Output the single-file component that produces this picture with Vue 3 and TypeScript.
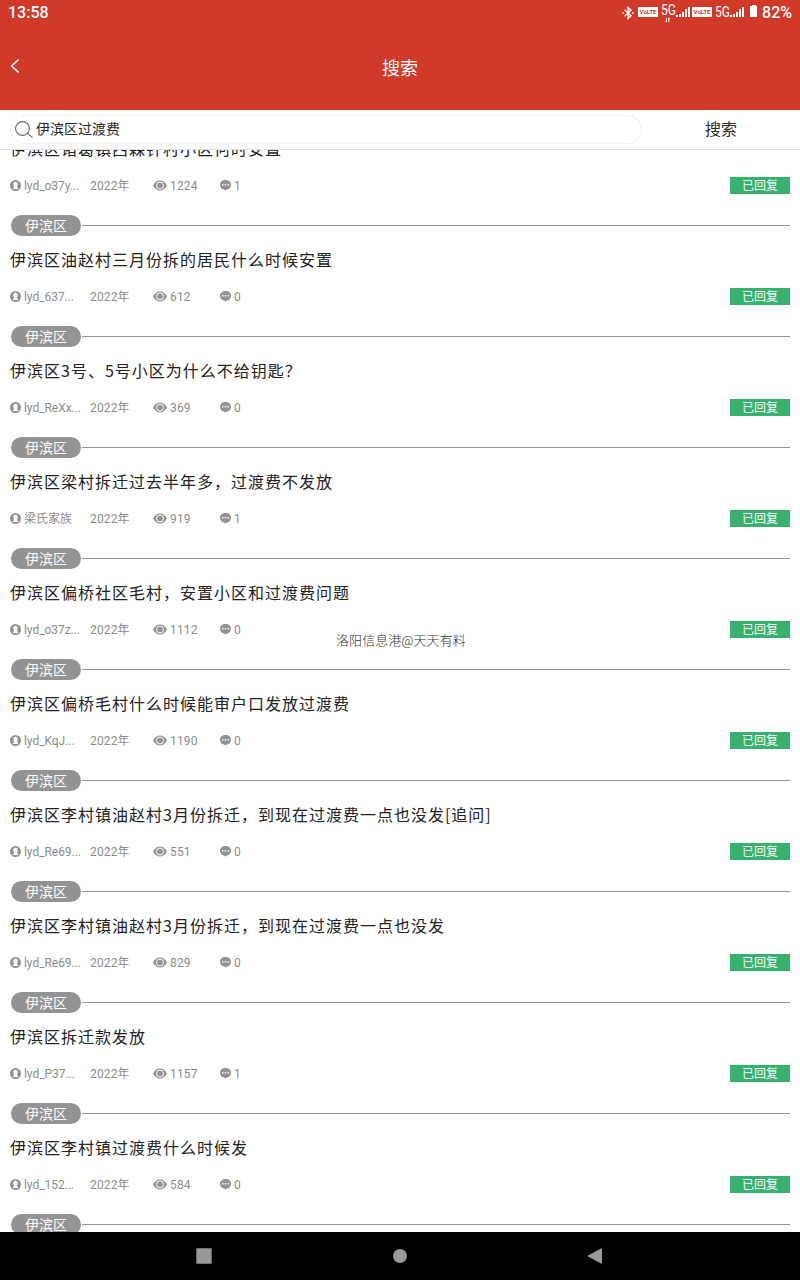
<script setup lang="ts">
interface Post {
  title: string
  user: string
  views: number
  replies: number
}

const year = '2022年'
const area = '伊滨区'
const keyword = '伊滨区过渡费'

const posts: Post[] = [
  { title: '伊滨区诸葛镇西森针村小区何时安置', user: 'lyd_o37y...', views: 1224, replies: 1 },
  { title: '伊滨区油赵村三月份拆的居民什么时候安置', user: 'lyd_637...', views: 612, replies: 0 },
  { title: '伊滨区3号、5号小区为什么不给钥匙？', user: 'lyd_ReXx...', views: 369, replies: 0 },
  { title: '伊滨区梁村拆迁过去半年多，过渡费不发放', user: '梁氏家族', views: 919, replies: 1 },
  { title: '伊滨区偏桥社区毛村，安置小区和过渡费问题', user: 'lyd_o37z...', views: 1112, replies: 0 },
  { title: '伊滨区偏桥毛村什么时候能审户口发放过渡费', user: 'lyd_KqJ...', views: 1190, replies: 0 },
  { title: '伊滨区李村镇油赵村3月份拆迁，到现在过渡费一点也没发[追问]', user: 'lyd_Re69...', views: 551, replies: 0 },
  { title: '伊滨区李村镇油赵村3月份拆迁，到现在过渡费一点也没发', user: 'lyd_Re69...', views: 829, replies: 0 },
  { title: '伊滨区拆迁款发放', user: 'lyd_P37...', views: 1157, replies: 1 },
  { title: '伊滨区李村镇过渡费什么时候发', user: 'lyd_152...', views: 584, replies: 0 },
]
</script>

<template>
  <div class="screen">
    <header class="header">
      <div class="status">
        <span class="clock">13:58</span>
        <div class="indicators">
          <svg class="bt" width="12" height="14" viewBox="0 0 12 14" fill="none" stroke="#fff" stroke-width="1.3">
            <path d="M2.500 3.800 9 9.800 6 12.600V1.400L9 4.200 2.500 10.200" />
            <path d="M.3 7h1.600M10 7h1.600" stroke-width="1.500" />
          </svg>
          <span class="volte">VoLTE</span>
          <span class="net"><span class="gen">5G</span>
            <svg class="arrows" width="6" height="6" viewBox="0 0 6 6" fill="none" stroke="#fff" stroke-width="1">
              <path d="M1.500 1v4M.3 3.800 1.500 5M3.800 5V1L5 2.200" />
            </svg>
          </span>
          <svg class="bars b1" width="14" height="11" viewBox="0 0 14 11" fill="#fff" shape-rendering="crispEdges">
            <path d="M0 9h2v2H0zM3 8h2v3H3zM6 6h2v5H6zM9 3h2v8H9zM12 1h2v10h-2z" />
          </svg>
          <span class="volte">VoLTE</span>
          <span class="net second"><span class="gen">5G</span></span>
          <svg class="bars b2" width="14" height="11" viewBox="0 0 14 11" fill="#fff" shape-rendering="crispEdges">
            <path d="M0 9h2v2H0zM3 8h2v3H3zM6 6h2v5H6zM9 3h2v8H9zM12 1h2v10h-2z" />
          </svg>
          <svg class="battery" width="8" height="12" viewBox="0 0 8 12" shape-rendering="crispEdges">
            <path d="M2 0h4v1h1v11H0V1h2z" fill="#fff" />
          </svg>
          <span class="percent">82%</span>
        </div>
      </div>
      <div class="nav">
        <svg class="back" width="10" height="14" viewBox="0 0 10 14" fill="none" stroke="#fff" stroke-width="1.500">
          <path d="M8.600.6 1.600 7l7 6.400" />
        </svg>
        <h1>搜索</h1>
      </div>
    </header>

    <div class="search">
      <div class="field">
        <svg width="18" height="18" viewBox="0 0 18 18" fill="none" stroke="#666" stroke-width="1.100">
          <circle cx="7.500" cy="7.500" r="6.900" />
          <path d="m12.500 12.200 5 4.400" />
        </svg>
        <span>{{ keyword }}</span>
      </div>
      <button class="go" type="button">搜索</button>
    </div>

    <main class="list">
      <article v-for="(p, i) in posts" :key="i" class="post">
        <div class="area"><span class="tag">{{ area }}</span><i class="rule"></i></div>
        <h2>{{ p.title }}</h2>
        <div class="meta">
          <span class="user">
            <svg width="11" height="11" viewBox="0 0 11 11">
              <circle cx="5.500" cy="5.500" r="5.500" fill="#939393" />
              <path d="M5.500 1.800c1.600 0 2.200 1 2.200 2.300 0 1-.2 1.600-.6 2.100v1.300l1 .6v1H2.900v-1l1-.6V6.200c-.4-.5-.6-1.100-.6-2.100 0-1.300.6-2.300 2.200-2.300z" fill="#fff" />
            </svg><span>{{ p.user }}</span>
          </span>
          <span class="year">{{ year }}</span>
          <span class="views">
            <svg width="14" height="11" viewBox="0 0 14 11">
              <path d="M0 5.500C3.500-1.300 10.500-1.300 14 5.500 10.500 12.300 3.500 12.300 0 5.500z" fill="#939393" />
              <circle cx="7" cy="5.500" r="3.500" fill="none" stroke="#fff" stroke-width="1" />
            </svg><span>{{ p.views }}</span>
          </span>
          <span class="replies">
            <svg width="11" height="11" viewBox="0 0 11 11">
              <path d="M5.500 0C8.800 0 11 2 11 4.800S9 9.400 7 9.600L5.500 10.400 4 9.600C2 9.400 0 7.600 0 4.800S2.200 0 5.500 0z" fill="#939393" />
              <path d="M2 4h1.400v1.400H2zM4.800 4h1.400v1.400H4.800zM7.600 4H9v1.400H7.600z" fill="#fff" />
            </svg><span>{{ p.replies }}</span>
          </span>
          <span class="badge">已回复</span>
        </div>
      </article>
      <div class="area"><span class="tag">{{ area }}</span><i class="rule"></i></div>
    </main>

    <footer class="sysnav">
      <svg width="16" height="16" viewBox="0 0 16 16"><rect x=".3" y=".3" width="15.400" height="15.400" rx="1" fill="#999" /></svg>
      <svg width="16" height="16" viewBox="0 0 16 16"><circle cx="8" cy="8" r="7" fill="#999" /></svg>
      <svg width="16" height="16" viewBox="0 0 16 16"><path d="M14 0v16L0 8.500v-1z" fill="#999" /></svg>
    </footer>

    <div class="watermark">洛阳信息港@天天有料</div>
  </div>
</template>

<style>
body {
  margin: 0;
  background: #fff;
}
</style>

<style scoped>
.screen {
  position: relative;
  width: 800px;
  height: 1280px;
  display: flex;
  flex-direction: column;
  overflow: hidden;
  background: #fff;
  font-family: Roboto, "Noto Sans CJK SC", sans-serif;
}
svg {
  display: block;
  flex: none;
}
.header {
  height: 110px;
  flex: none;
  background: #d13a29;
  color: #fff;
}
.status {
  height: 25px;
  display: flex;
  justify-content: space-between;
  padding: 0 8px;
  font-size: 16px;
  font-weight: 500;
  line-height: 25px;
}
.indicators {
  display: flex;
  align-items: flex-start;
}
.bt {
  margin: 6px 4px 0 0;
}
.volte {
  width: 20px;
  height: 10px;
  margin-top: 7px;
  background: #fff;
  color: #d13a29;
  font-size: 6px;
  font-weight: 700;
  line-height: 10px;
  text-align: center;
}
.net {
  position: relative;
  width: 15px;
  margin: 2px 0 0 3px;
  font-size: 12px;
  font-weight: 400;
  line-height: 16px;
}
.gen {
  display: block;
  transform: scaleY(1.2);
}
.net.second {
  margin-top: 4px;
}
.arrows {
  position: absolute;
  left: 4px;
  top: 15px;
}
.bars {
  margin-top: 6px;
}
.b1 {
  margin-right: 2px;
}
.battery {
  margin: 5px 4px 0 6px;
}
.nav {
  height: 85px;
  display: flex;
  align-items: center;
  box-sizing: border-box;
  padding: 0 10px;
}
.back {
  margin-right: -10px;
  margin-top: -3px;
}
h1 {
  flex: 1;
  margin: 2px 0 0;
  text-align: center;
  font-size: 18px;
  font-weight: 400;
  line-height: 26px;
}
.search {
  height: 40px;
  flex: none;
  box-sizing: border-box;
  border-bottom: 1px solid #e0e0e0;
  display: flex;
  align-items: center;
  padding-left: 10px;
}
.field {
  width: 632px;
  height: 29px;
  box-sizing: border-box;
  border: 1px solid #eee;
  border-radius: 15px;
  display: flex;
  align-items: center;
  gap: 3px;
  padding-left: 4px;
  font-size: 14px;
  color: #2a2a2a;
}
.field span {
  line-height: 24px;
  padding-bottom: 1px;
}
.go {
  flex: 1;
  border: 0;
  padding: 0 0 3px;
  background: none;
  font: inherit;
  font-size: 16px;
  color: #2a2a2a;
}
.list {
  height: 1082px;
  flex: none;
  overflow: hidden;
  display: flex;
  flex-direction: column;
}
.post {
  height: 111px;
  flex: none;
}
.post:first-child {
  margin-top: -46px;
}
.area {
  display: flex;
  align-items: center;
  flex: none;
  gap: 1px;
  height: 21px;
  padding: 0 10px 0 11px;
}
.tag {
  box-sizing: border-box;
  width: 70px;
  height: 21px;
  padding-top: 1px;
  border-radius: 11px;
  background: #939393;
  color: #fff;
  font-size: 14px;
  line-height: 21px;
  text-align: center;
}
.rule {
  flex: 1;
  height: 1px;
  background: #939393;
}
h2 {
  margin: 11px 10px 0;
  font-family: "Noto Sans CJK SC", sans-serif;
  font-size: 16px;
  font-weight: 400;
  line-height: 24px;
  letter-spacing: 1px;
  color: #222;
  white-space: nowrap;
}
.meta {
  display: grid;
  grid-template-columns: 80px 63px 67px 1fr 60px;
  height: 17px;
  margin: 17px 10px 0;
  font-size: 12px;
  line-height: 19px;
  color: #8c8c8c;
}
.user,
.views,
.replies {
  display: flex;
  align-items: flex-start;
  gap: 3px;
  white-space: nowrap;
}
.meta svg {
  margin-top: 3px;
}
.views,
.year {
  letter-spacing: 0.15px;
}
.user {
  letter-spacing: -0.05px;
}
.badge {
  height: 17px;
  line-height: 18px;
  background: #36b26e;
  color: #fff;
  text-align: center;
}
.sysnav {
  height: 48px;
  flex: none;
  background: #000;
  display: flex;
  align-items: center;
  justify-content: center;
  gap: 180px;
}
.watermark {
  position: absolute;
  left: 336px;
  top: 631px;
  font-size: 13px;
  font-weight: 300;
  line-height: 20px;
  letter-spacing: 0.1px;
  color: #333;
  white-space: nowrap;
}
</style>
